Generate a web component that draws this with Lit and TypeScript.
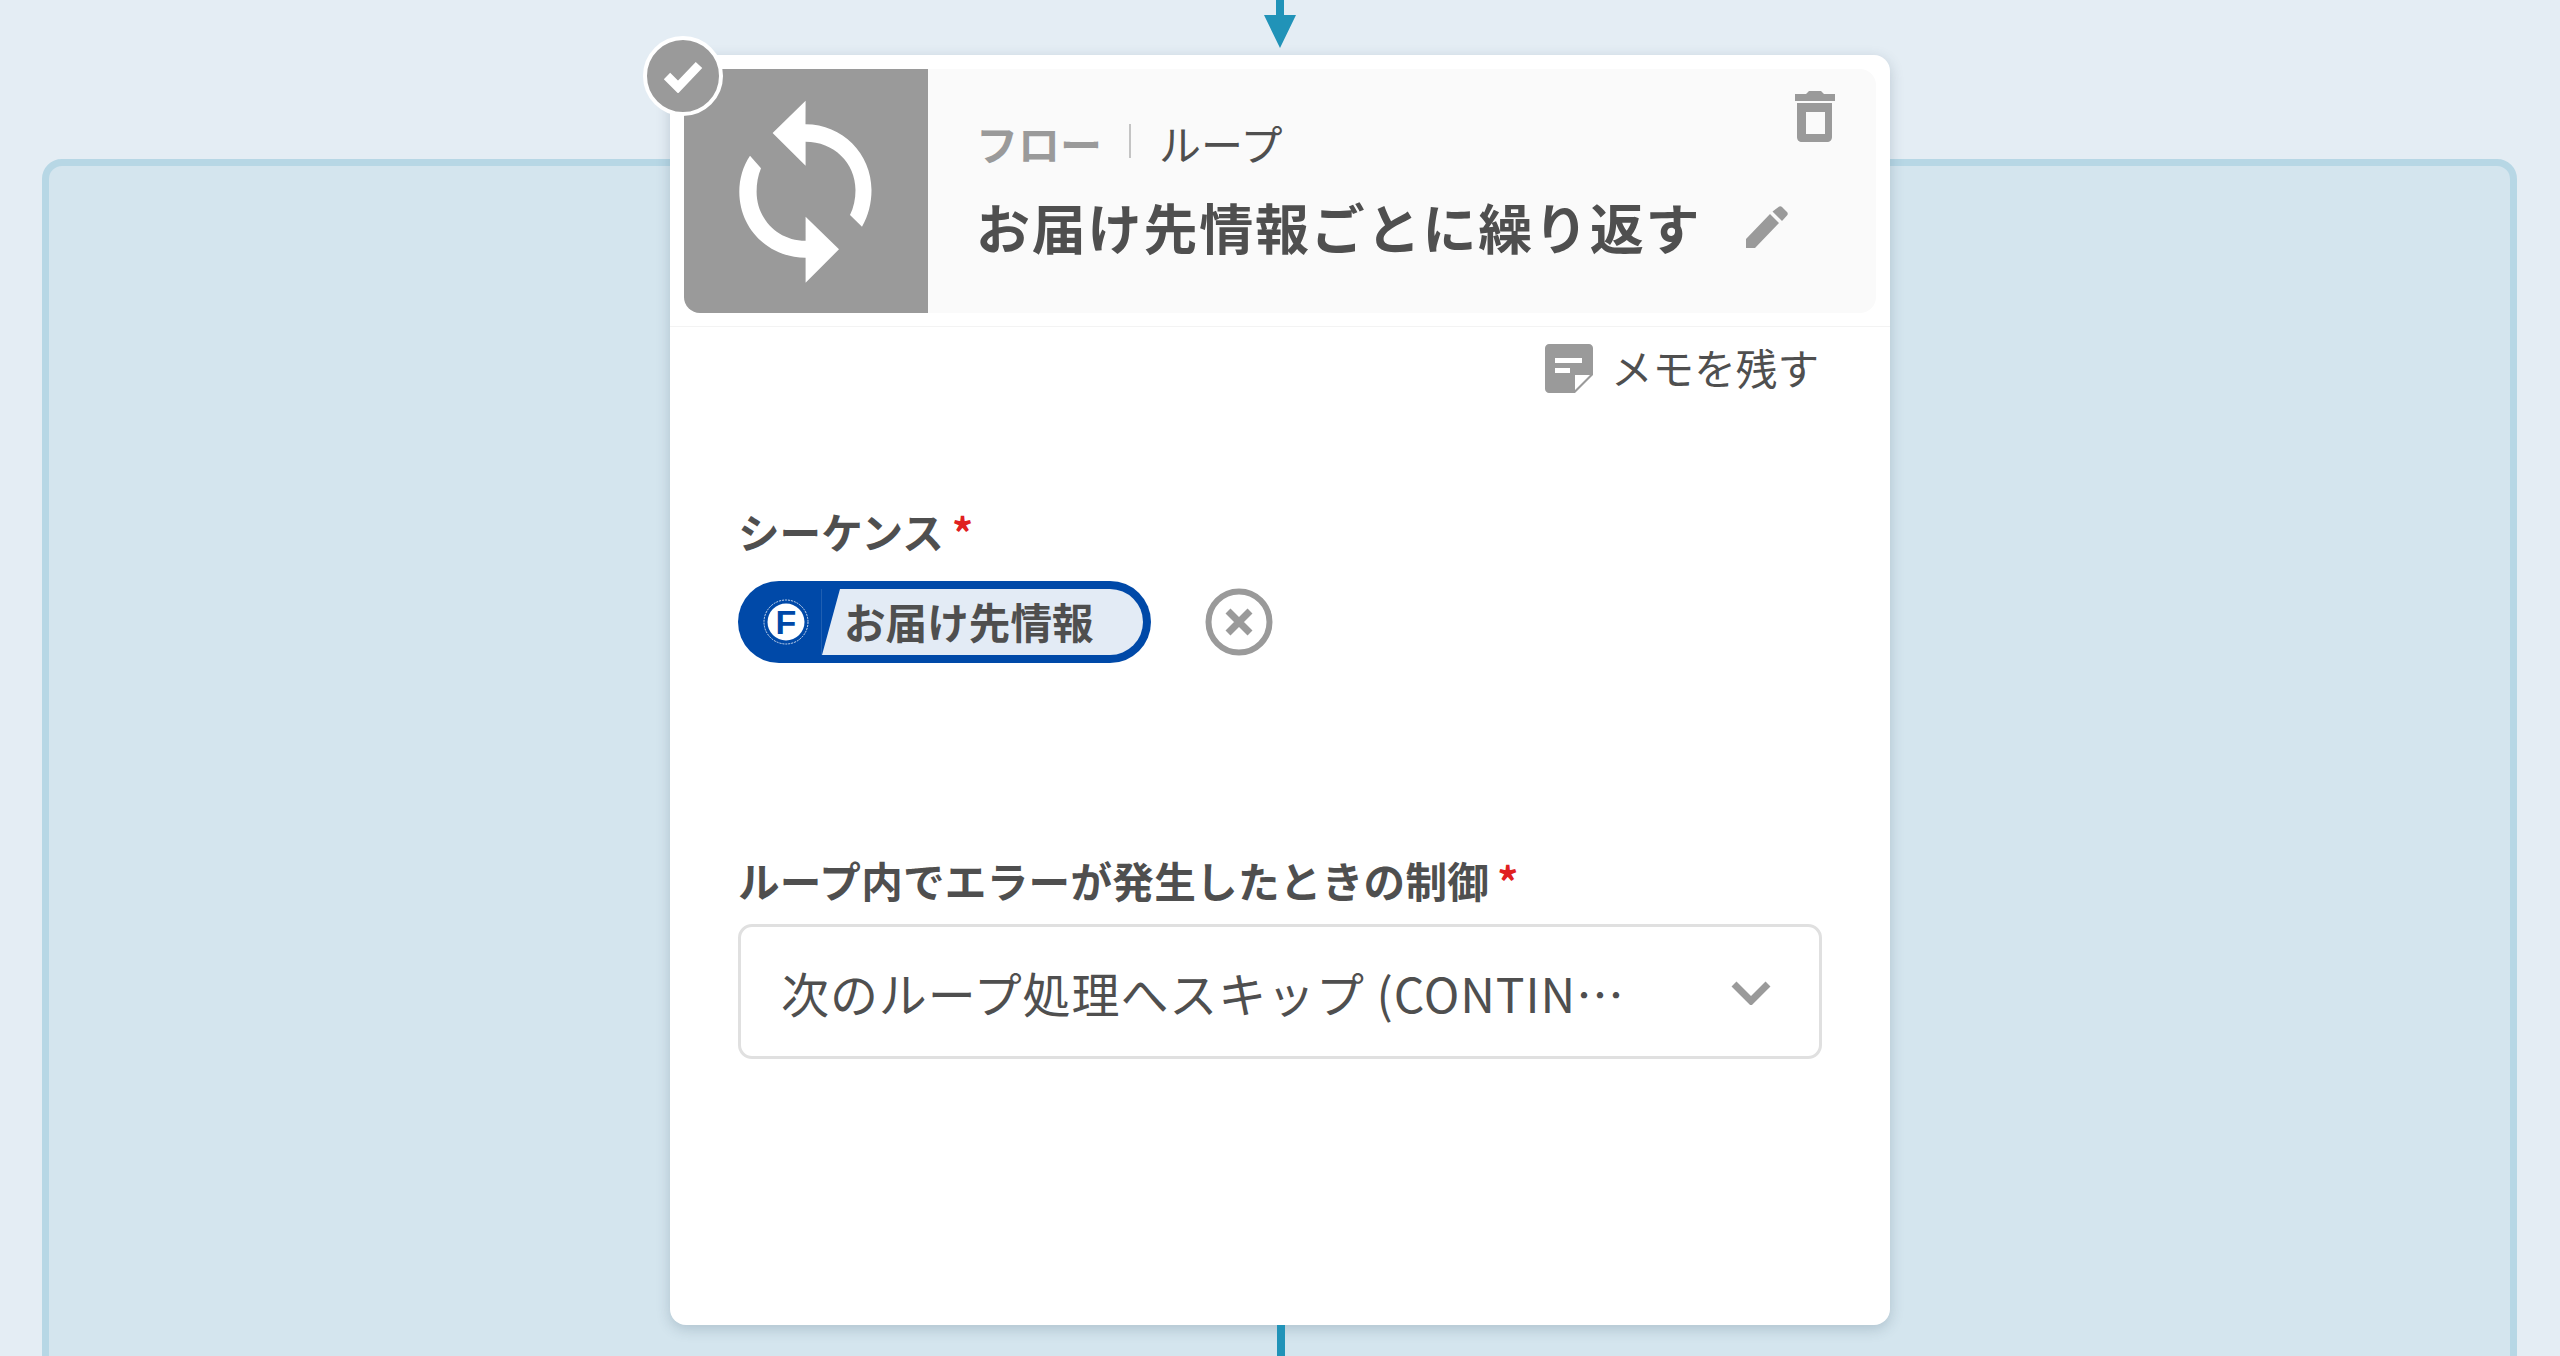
import { LitElement, css, html } from 'lit'
import { customElement } from 'lit/decorators.js'

@customElement('app-root')
export class AppRoot extends LitElement {
  render() {
    return html`
      <div class="canvas" lang="ja">
        <div class="frame"></div>
        <div class="arrow">
          <svg width="34" height="48" viewBox="0 0 34 48">
            <path d="M13 0h8v15h12L17 48 1 15h12z" fill="#2193b8" />
          </svg>
        </div>

        <section class="card">
          <header class="head">
            <div class="thumb">
              <svg width="244" height="244" viewBox="0 0 244 244">
                <path
                  fill="#fff"
                  d="M121.6 31.7L88.6 64l33 32.7v-24c28 0 49.9 21 49.9 48.300c0 9-1.800 17.500-5.500 25l12 11.700c6.300-11 9.500-23.500 9.500-36.700 0-36-29-65.700-66-65.700z"
                />
                <path
                  fill="#fff"
                  d="M121.600 147.700l33.400 32.600-33.400 33.400v-25c-37 0-66.300-29-66.300-66 0-13 3.700-25.500 10.700-36l11 12.600c-3 7-4.400 15-4.400 23.400 0 27 21 49 49 49z"
                />
              </svg>
            </div>
            <div class="titles">
              <div class="crumbs">
                <span class="crumb-main">フロー</span>
                <span class="crumb-sep"></span>
                <span class="crumb-sub">ループ</span>
              </div>
              <div class="title-row">
                <span class="title">お届け先情報ごとに繰り返す</span>
                <svg class="pencil" width="42" height="42" viewBox="0 0 42 42">
                  <path fill="#9a9a9a" d="M0 33v9h9L33 17l-9-9zM26.500 5.500l9.500 9.500 5-5.500c1-1 1-2.500 0-3.500L36 1c-1-1-2.500-1-3.500 0z" />
                </svg>
              </div>
            </div>
            <svg class="trash" width="40" height="51" viewBox="0 0 40 51">
              <path
                fill="#9a9a9a"
                fill-rule="evenodd"
                d="M14 0h12l3 3h11v7H0V3h11zM2 12h35v34c0 3-2 5-5 5H7c-3 0-5-2-5-5zm9 9v22h19V21z"
              />
            </svg>
          </header>

          <div class="memo-row">
            <svg width="48" height="49" viewBox="0 0 48 49">
              <path fill="#9a9a9a" d="M4 0h40c2 0 4 2 4 4v27L30 49H4c-2 0-4-2-4-4V4c0-2 2-4 4-4z" />
              <path fill="#fff" d="M10 14h27v5H10zM10 24h15v5H10zM30 46V31h15z" />
            </svg>
            <span>メモを残す</span>
          </div>

          <div class="field seq">
            <div class="label">シーケンス<span class="req">*</span></div>
            <div class="seq-row">
              <div class="chip">
                <div class="chip-icon">
                  <svg width="48" height="48" viewBox="0 0 48 48">
                    <circle cx="24" cy="24" r="22" fill="none" stroke="#cfdcef" stroke-width="1" stroke-dasharray="2 1" />
                    <circle cx="24" cy="24" r="18.500" fill="#fff" />
                    <text x="24" y="36" text-anchor="middle" class="chip-f">F</text>
                  </svg>
                </div>
                <div class="chip-label">お届け先情報</div>
              </div>
              <svg class="clear" width="68" height="68" viewBox="0 0 68 68">
                <circle cx="34" cy="34" r="30.500" fill="none" stroke="#9a9a9a" stroke-width="6" />
                <path d="M23 23l22 22M45 23L23 45" stroke="#9a9a9a" stroke-width="7" fill="none" />
              </svg>
            </div>
          </div>

          <div class="field ctrl">
            <div class="label long">ループ内でエラーが発生したときの制御<span class="req">*</span></div>
            <div class="select">
              <span>次のループ処理へスキップ (CONTIN…</span>
              <svg width="40" height="25" viewBox="0 0 40 25">
                <path d="M3 4l17 17L37 4" fill="none" stroke="#9a9a9a" stroke-width="7" />
              </svg>
            </div>
          </div>
        </section>

        <div class="badge">
          <svg width="42" height="34" viewBox="0 0 42 34">
            <path d="M5 17l11 11L37 6" fill="none" stroke="#fff" stroke-width="9" />
          </svg>
        </div>

        <div class="line"></div>
      </div>
    `
  }

  static styles = css`
    :host {
      display: block;
      font-family: 'Noto Sans CJK JP', 'Noto Sans', sans-serif;
      color: #4f4f4f;
    }

    .canvas {
      position: relative;
      height: 1356px;
      overflow: hidden;
      background: #e4edf4;
      display: flex;
      flex-direction: column;
      align-items: center;
    }

    .frame {
      position: absolute;
      left: 42px;
      right: 43px;
      top: 159px;
      height: 1400px;
      box-sizing: border-box;
      background: #d4e5ee;
      border: 7px solid #b7d7e5;
      border-radius: 20px;
    }

    .arrow {
      position: relative;
      height: 48px;
      margin-bottom: 7px;
      flex: none;
    }

    .arrow svg,
    .thumb svg,
    .badge svg {
      display: block;
    }

    .card {
      position: relative;
      width: 1220px;
      height: 1270px;
      flex: none;
      box-sizing: border-box;
      background: #fff;
      border-radius: 16px;
      box-shadow: 0 4px 14px rgba(40, 70, 90, 0.22);
      padding: 14px 14px 0;
    }

    .head {
      height: 244px;
      display: flex;
      background: #fafafa;
      border-radius: 16px;
      position: relative;
    }

    .head::after {
      content: '';
      position: absolute;
      left: -14px;
      right: -14px;
      bottom: -14px;
      border-bottom: 1px solid #f3f3f3;
    }

    .thumb {
      width: 244px;
      height: 244px;
      flex: none;
      background: #9a9a9a;
      border-radius: 0 0 0 16px;
    }

    .titles {
      flex: 1;
      padding: 48px 0 0 48px;
    }

    .crumbs {
      display: flex;
      align-items: center;
      height: 52px;
      font-size: 42px;
      line-height: 52px;
    }

    .crumb-main {
      color: #9a9a9a;
      font-weight: 700;
    }

    .crumb-sep {
      width: 2px;
      height: 34px;
      margin: 0 28px 4px 27px;
      background: #c4c4c4;
    }

    .title-row {
      display: flex;
      align-items: center;
      margin-top: 23px;
      height: 70px;
    }

    .title {
      font-size: 54px;
      line-height: 70px;
      font-weight: 700;
      letter-spacing: 1.800px;
    }

    .pencil {
      margin-left: 45px;
    }

    .trash {
      position: absolute;
      top: 22px;
      right: 41px;
    }

    .memo-row {
      display: flex;
      justify-content: flex-end;
      align-items: center;
      gap: 18px;
      margin-top: 31px;
      padding-right: 57px;
      height: 49px;
      font-size: 41.600px;
      line-height: 49px;
    }

    .memo-row span {
      margin-top: -2px;
    }

    .field {
      margin: 0 54px;
    }

    .seq {
      margin-top: 112px;
    }

    .ctrl {
      margin-top: 191px;
    }

    .label {
      font-size: 41.600px;
      line-height: 52px;
      font-weight: 700;
    }

    .label.long {
      letter-spacing: 0.280px;
    }

    .req {
      color: #e02020;
      margin-left: 8px;
    }

    .seq-row {
      display: flex;
      align-items: center;
      gap: 54px;
      margin-top: 24px;
    }

    .chip {
      width: 413px;
      height: 82px;
      box-sizing: border-box;
      padding: 8px 8px 8px 0;
      background: #0049a8;
      border-radius: 41px;
      display: flex;
    }

    .chip-icon {
      width: 84px;
      flex: none;
      display: flex;
      align-items: center;
      padding-left: 24px;
      box-sizing: border-box;
      border-right: 1px solid rgba(255, 255, 255, 0.12);
    }

    .chip-f {
      font-family: 'Liberation Sans', sans-serif;
      font-weight: 700;
      font-size: 34px;
      fill: #0049a8;
    }

    .chip-label {
      flex: 1;
      background: #e3ebf5;
      border-radius: 0 33px 33px 0;
      clip-path: polygon(18px 0, 100% 0, 100% 100%, 0 100%);
      padding-left: 22px;
      font-size: 41.600px;
      line-height: 64px;
      font-weight: 700;
    }

    .select {
      margin-top: 18px;
      height: 135px;
      box-sizing: border-box;
      border: 3px solid #e0e0e0;
      border-radius: 14px;
      display: flex;
      align-items: center;
      justify-content: space-between;
      padding: 0 48px 0 40px;
      font-size: 48px;
      letter-spacing: 0.900px;
    }

    .select svg {
      margin-top: 2px;
    }

    .badge {
      position: absolute;
      left: 643px;
      top: 36px;
      width: 80px;
      height: 80px;
      box-sizing: border-box;
      border: 4px solid #fff;
      border-radius: 50%;
      background: #9a9a9a;
      display: flex;
      align-items: center;
      justify-content: center;
    }

    .line {
      position: absolute;
      left: 1277px;
      top: 1325px;
      width: 8px;
      height: 31px;
      background: #2193b8;
    }
  `
}

declare global {
  interface HTMLElementTagNameMap {
    'app-root': AppRoot
  }
}
